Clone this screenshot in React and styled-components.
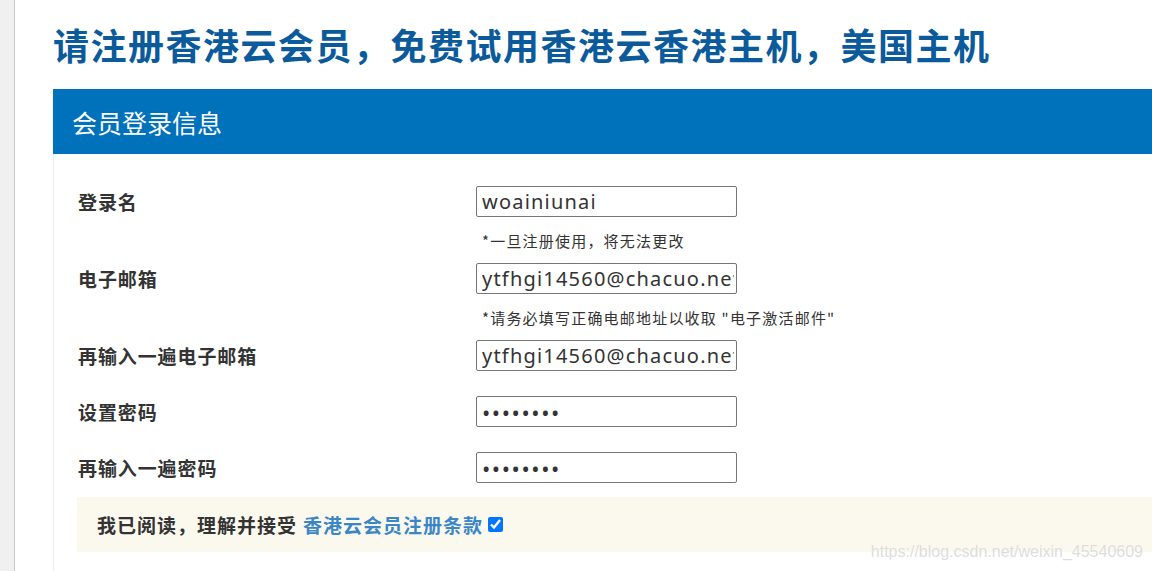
import React from "react";
import styled, { createGlobalStyle } from "styled-components";

const GlobalStyle = createGlobalStyle`
  html, body {
    margin: 0;
    padding: 0;
    background: #ffffff;
    overflow: hidden;
  }
  body {
    font-family: "Noto Sans CJK SC", "Noto Sans", sans-serif;
  }
`;

const Page = styled.div`
  display: flex;
  height: 100vh;
  overflow: hidden;
  position: relative;
`;

const Sidebar = styled.div`
  width: 14px;
  flex-shrink: 0;
  background: #f0f0f0;
  border-right: 1px solid #c9c9c9;
`;

const Main = styled.div`
  flex: 1;
  padding-left: 38px;
`;

const Title = styled.h1`
  margin: 0;
  padding-top: 21px;
  height: 89px;
  box-sizing: border-box;
  font-size: 36px;
  line-height: 46px;
  font-weight: 700;
  color: #0a5a9c;
  white-space: nowrap;
  letter-spacing: 1.5px;
`;

const SectionHeader = styled.div`
  height: 65px;
  background: #0071bb;
  display: flex;
  align-items: center;
  padding-left: 19px;
  color: #ffffff;
  font-size: 25px;
  font-weight: 400;
`;

const Panel = styled.div`
  border-left: 1px solid #ececec;
  padding: 32px 0 40px 24px;
`;

const Row = styled.div`
  display: flex;
  align-items: flex-start;
  padding-bottom: ${(p) => p.$gap}px;
`;

const Label = styled.div`
  width: 398px;
  flex-shrink: 0;
  height: 31px;
  line-height: 31px;
  font-size: 19px;
  letter-spacing: 0.9px;
  font-weight: 700;
  color: #333333;
`;

const Field = styled.div`
  display: flex;
  flex-direction: column;
`;

const Input = styled.input`
  display: block;
  width: 261px;
  height: 31px;
  box-sizing: border-box;
  border: 1px solid #767676;
  border-radius: 2px;
  padding: 0 2px 0 5px;
  margin: 0;
  font-family: "Noto Sans", sans-serif;
  font-size: 20px;
  letter-spacing: 1.2px;
  color: #333333;
  background: #ffffff;
  outline: none;
  &[type="password"] {
    font-size: 22px;
    letter-spacing: 1.6px;
  }
`;

const Hint = styled.div`
  margin: 15px 0 13px 6px;
  height: 18px;
  line-height: 18px;
  font-size: 15px;
  letter-spacing: 1.2px;
  color: #333333;
  white-space: nowrap;
`;

const Agree = styled.div`
  margin-left: -1px;
  height: 55px;
  display: flex;
  align-items: center;
  padding-left: 20px;
  background: #fbf9ee;
  font-size: 19px;
  letter-spacing: 1px;
  font-weight: 700;
  color: #333333;
  white-space: nowrap;
`;

const TermsLink = styled.a`
  color: #3b86c6;
  text-decoration: none;
  margin-left: 6px;
`;

const Check = styled.input`
  width: 15px;
  height: 15px;
  margin: 0 0 0 5px;
  accent-color: #0075ff;
`;

const Watermark = styled.div`
  position: absolute;
  right: 9px;
  bottom: 10px;
  font-family: "Liberation Sans", Arial, sans-serif;
  font-size: 16px;
  color: rgba(215, 215, 215, 0.85);
  text-shadow: 0 0 1px rgba(255, 255, 255, 0.8);
`;

const fields = [
  { label: "登录名", value: "woainiunai", hint: "*一旦注册使用，将无法更改" },
  {
    label: "电子邮箱",
    value: "ytfhgi14560@chacuo.net",
    hint: "*请务必填写正确电邮地址以收取 \"电子激活邮件\"",
  },
  { label: "再输入一遍电子邮箱", value: "ytfhgi14560@chacuo.net" },
  { label: "设置密码", value: "12345678", type: "password" },
  { label: "再输入一遍密码", value: "12345678", type: "password", last: true },
];

export default function App() {
  return (
    <>
      <GlobalStyle />
      <Page>
        <Sidebar />
        <Main>
          <Title>请注册香港云会员，免费试用香港云香港主机，美国主机</Title>
          <SectionHeader>会员登录信息</SectionHeader>
          <Panel>
            {fields.map((f) => (
              <Row key={f.label} $gap={f.hint ? 0 : f.last ? 14 : 25}>
                <Label>{f.label}</Label>
                <Field>
                  <Input type={f.type || "text"} defaultValue={f.value} />
                  {f.hint && <Hint>{f.hint}</Hint>}
                </Field>
              </Row>
            ))}
            <Agree>
              我已阅读，理解并接受
              <TermsLink href="#">香港云会员注册条款</TermsLink>
              <Check type="checkbox" defaultChecked />
            </Agree>
          </Panel>
        </Main>
        <Watermark>https://blog.csdn.net/weixin_45540609</Watermark>
      </Page>
    </>
  );
}
